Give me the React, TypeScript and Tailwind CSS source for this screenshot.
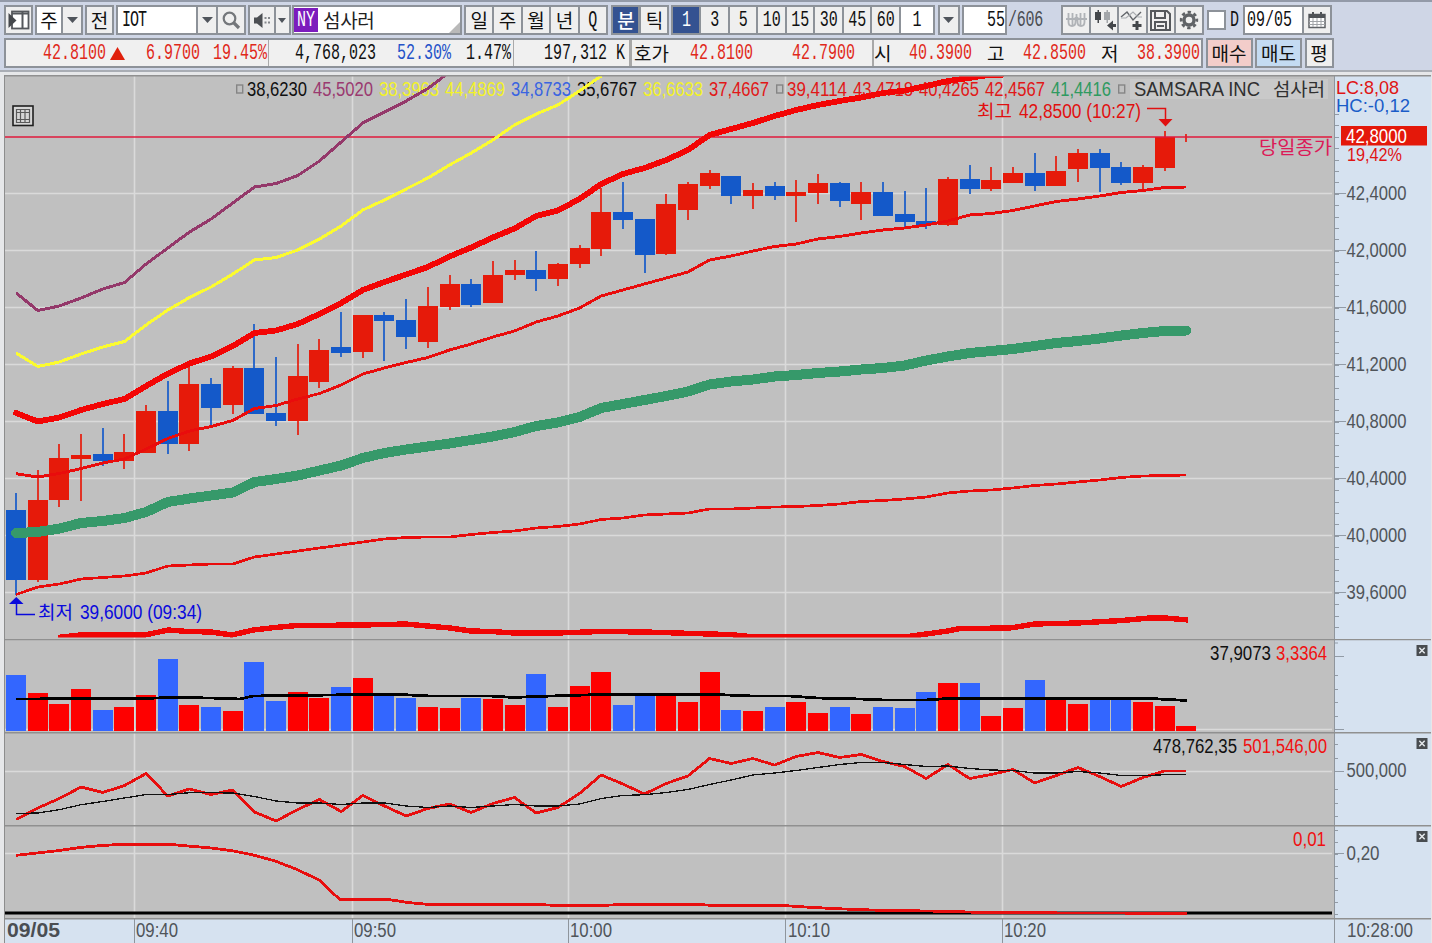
import React from "react";

const RED = "#e61a0a";
const BLUE = "#1459c9";
const X0 = 16.1;
const STEP = 21.67;
const cx = (i: number) => X0 + STEP * i;

type Candle = [0 | 1, number, number, number, number];

// [rising, bodyTop, bodyBottom, high, low]
const candles: Candle[] = [
  [0, 510, 580, 493, 595], [1, 499.5, 580, 469.5, 582], [1, 457.7, 500.3, 444, 506.7],
  [1, 454.5, 459, 433.5, 500.7], [0, 454, 460.5, 427.5, 466], [1, 451.5, 460.5, 433.5, 469],
  [1, 411, 452.7, 405, 452.7], [0, 411, 443.5, 381, 454], [1, 384, 443.5, 366, 451],
  [0, 384, 407.7, 377.7, 425], [1, 367.7, 404.7, 365.7, 414], [0, 367.7, 413.7, 324, 413.7],
  [0, 412.5, 421, 357, 425.7], [1, 375.5, 421, 343.5, 435], [1, 349.7, 382, 339, 388],
  [0, 346.5, 352.5, 312, 356.7], [1, 315, 352, 315, 358], [0, 315, 320.7, 312, 361],
  [0, 319.7, 337.3, 298.5, 349], [1, 306, 341.7, 286.7, 347.7], [1, 283.5, 307, 274.7, 310],
  [0, 283.5, 304.5, 279, 307], [1, 274.7, 303, 261, 303], [1, 270, 274.5, 259.5, 280],
  [0, 270, 278.7, 250.5, 290.7], [1, 264, 278.7, 262.5, 286], [1, 247.5, 263.7, 244.5, 268],
  [1, 211.7, 248.7, 188, 256], [0, 211.7, 220.3, 181.7, 229], [0, 219.3, 254.7, 219.3, 273],
  [1, 204, 253.5, 193.5, 254.7], [1, 184.3, 210, 181.7, 220], [1, 172.7, 185.7, 169.5, 188.7],
  [0, 175.5, 196.3, 175.5, 204], [1, 190.3, 196.3, 183, 208.5], [0, 186, 196.3, 181.7, 199.5],
  [1, 191.7, 196.3, 180, 221.7], [1, 182.7, 193.3, 174, 203.7], [0, 182.7, 200.7, 181.5, 207],
  [1, 191.7, 203.7, 181.5, 220.3], [0, 191.7, 216, 181.5, 216], [0, 214.3, 221.7, 190.5, 228],
  [0, 220.5, 225.3, 187.5, 229], [1, 178.5, 225, 177, 226.3], [0, 178.5, 189, 165, 193.5],
  [1, 180, 189, 166.5, 190.5], [1, 172.5, 182.7, 166.5, 182.7], [0, 172.5, 186, 152.7, 190.5],
  [1, 171, 186, 156, 186], [1, 153, 169.3, 148.7, 181.5], [0, 153, 167.7, 148.5, 191.7],
  [0, 166.5, 182.7, 162, 184.5], [1, 166.5, 182.7, 165, 189], [1, 137, 167.7, 130.5, 170.7],
  [1, 137, 137, 133.5, 142.3],
];

const volumeTops = [
  675, 693, 703.5, 688.5, 709.5, 706.5, 694.5, 658.5, 705, 706.5, 711, 661.5, 700.5, 691.5, 697.5,
  687, 678, 695.5, 698, 706.5, 708, 697.5, 699, 705, 673.5, 706.5, 685.5, 672, 705, 696, 696, 702,
  672, 709.5, 711, 706.5, 702, 712.5, 706.5, 714, 706.5, 708, 691.5, 682.5, 682.5, 715.5, 708,
  679.5, 699.5, 703.5, 699.5, 700, 702, 705.5, 726,
];

const series = (ys: number[]) => ys.map((y, i) => `${cx(i).toFixed(1)},${y}`).join(" ");

const purple =
  series([293, 310.5, 306, 298, 289, 282.5, 264, 248, 232, 219, 203, 187, 183.5, 175.5, 161, 142, 123, 112, 101, 88.5]) +
  " 443,77 450,72";
const yellow = series([
  353, 366.5, 362, 354, 347, 341.5, 325, 310, 297.5, 287, 274, 260, 257.5, 250, 239, 226, 210, 200, 189,
  178, 165, 153, 140, 125, 114, 105, 91, 76,
]);
const upperBand =
  series([
    413, 421.5, 417.5, 410, 404, 399, 386, 373.7, 363.5, 356.5, 346, 333, 330.5, 324, 314, 303, 290, 282,
    274.5, 267, 256.5, 247.5, 237.5, 228.5, 216, 210.5, 199, 184, 174, 168, 160, 150, 135, 129, 123, 116,
    110, 105, 101, 97.5, 93, 90.5, 86, 81, 78,
  ]) + " 985,75.5 1002,75";
const midBand = series([
  473.7, 477, 473.5, 468.5, 463, 459, 449, 438.5, 431, 426.5, 420.5, 408.5, 405.5, 399, 393.5, 385, 374,
  368, 362.5, 357.5, 350, 344, 337, 331, 322, 316, 308, 296, 290, 284, 278, 272, 260, 256, 251, 246.5,
  244, 239, 236.5, 233, 230, 228, 225, 221, 215, 213.5, 210.5, 206, 201.5, 199, 196, 192.5, 190.5, 187.5, 187,
]);
const green = series([
  533, 532, 528.5, 523, 521, 518, 512, 502, 498.5, 495.5, 492.5, 482, 479, 475.5, 470.5, 465.5, 458, 453,
  449.5, 446.5, 443.5, 440, 436.5, 432, 426, 422.5, 417, 408, 404, 400, 396, 391.5, 384.5, 381.5, 379.5,
  376.5, 375, 373, 371.5, 369.5, 368, 365.5, 360.5, 356.5, 353, 351, 349, 346, 343, 341, 338.5, 335.5,
  333, 331, 330.5,
]);
const lowBand = series([
  594.5, 587, 584, 579, 577.5, 576, 573, 566, 565, 564, 564, 557, 554, 551, 548, 545, 542, 539, 537.5,
  537, 537, 534.5, 532.5, 531, 528, 526.5, 524, 519.5, 518, 515, 514, 513, 509, 509, 508, 507, 506.5,
  505.5, 504, 501.5, 500.5, 499, 497, 493, 491, 490, 488, 485.5, 484, 482, 480, 477.5, 476, 475.5, 475,
]);
const floorBand =
  "58,637.5 80,635 145,635 168,630 188,631.5 211,632 232,635 253,630 275,627.5 297,625.5 363,625 406,624 427,626 450,628 471,631 492,631.5 514,633 557,633 601,631.5 645,632 709,634 730,634.5 755,637 905,637 926,634 948,631 960,628.5 1010,628 1035,624 1078,623 1122,620.5 1150,618 1165,618 1188,620";
const volumeAvg =
  "16,699 145,698.5 168,697.5 211,698 240,699 253,696 297,695.5 363,694.5 400,694.5 430,696 490,696 514,697.5 535,696.5 601,694.5 715,694.5 752,696 790,696 817,698 860,699 884,700 926,700 948,698.5 1150,698.5 1187,700.5";
const amount = series([
  819.5, 808, 798.5, 787, 792.5, 785.5, 773.5, 796, 789, 794.5, 790, 812, 821, 809.5, 799.5, 811.5, 795.5,
  806, 816, 808.5, 804, 812.5, 803.5, 797.5, 813, 807.5, 793.5, 775, 784, 794, 783.5, 776, 758.5, 763.5,
  758.5, 765, 756.5, 752.5, 757.5, 754.5, 761.5, 766.5, 778.5, 764.5, 778.5, 774.5, 769.5, 783, 775.5,
  767.5, 776.5, 786.5, 777.5, 771, 771,
]);
const amountAvg = series([
  813.5, 813, 809.7, 804.7, 801.5, 798, 794.5, 794.5, 792.7, 792.7, 793, 796.5, 801, 803, 803, 804.5, 803,
  803, 806, 807.5, 806, 807.5, 806, 804.5, 806, 806, 804, 798.5, 795.5, 794.7, 792.5, 789.5, 784.5, 780,
  775, 773, 770.5, 767.5, 764.5, 762.5, 762.5, 764.5, 766.5, 766, 768.5, 770, 770.5, 773, 773, 771.5, 773,
  775.5, 775.7, 774.7, 774.7,
]);
const slope =
  "16,855.3 37,853 58,850.7 80,847.5 102,845.5 124,844.2 168,844.2 188,846 211,848 232,850.7 253,855 275,861 297,869.5 319,880 340,899.7 390,899.7 406,902.3 427,904.3 535,904.3 557,905.5 601,905.5 622,904.5 700,904.5 715,905.7 786,905.7 805,907 836,908.7 880,910.3 945,911.3 990,912.7 1187,913.3";

const gridX = [134, 352, 568, 785, 1002];
const gridY = [193.5, 250.5, 307.5, 364.5, 421.5, 478.5, 535.5, 592.5];
const priceLabels = ["42,4000", "42,0000", "41,6000", "41,2000", "40,8000", "40,4000", "40,0000", "39,6000"];

function Label(p: { x: number; y: number; w: number; fill: string; children: string; size?: number; bold?: boolean; kr?: boolean }) {
  return (
    <text
      x={p.x}
      y={p.y}
      textLength={p.w}
      lengthAdjust="spacingAndGlyphs"
      fill={p.fill}
      fontSize={p.size ?? 20}
      fontWeight={p.bold ? 700 : 400}
      fontFamily={p.kr ? "'Noto Sans CJK KR', sans-serif" : "'Liberation Sans', sans-serif"}
    >
      {p.children}
    </text>
  );
}

function VerticalGrid({ y1, y2 }: { y1: number; y2: number }) {
  return (
    <g stroke="#dadada" strokeWidth={1.6}>
      {gridX.map((x) => (
        <line key={x} x1={x + 0.5} x2={x + 0.5} y1={y1} y2={y2} />
      ))}
    </g>
  );
}

function Ticks({ ys, w }: { ys: number[]; w: number }) {
  return (
    <g stroke="#929ba6" strokeWidth={1}>
      {ys.map((y) => (
        <line key={y} x1={1335} x2={1335 + w} y1={y} y2={y} />
      ))}
    </g>
  );
}

function CloseBox({ y }: { y: number }) {
  return (
    <g>
      <rect x={1416.5} y={y} width={11} height={11} fill="#484c50" />
      <path d={`M1419.3 ${y + 2.8}l5.4 5.4m0 -5.4l-5.4 5.4`} stroke="#e4e8ec" strokeWidth={1.5} />
    </g>
  );
}

function Panel(p: { top: number; height: number; plot: React.ReactNode; axis: React.ReactNode; className: string }) {
  return (
    <div className={`flex shrink-0 ${p.className}`}>
      <svg className="block shrink-0 bg-[#c0c0c0]" width={1329} height={p.height} viewBox={`5 ${p.top} 1329 ${p.height}`}>
        {p.plot}
      </svg>
      <svg className="block shrink-0 bg-[#d6e2f0]" width={97} height={p.height} viewBox={`1334 ${p.top} 97 ${p.height}`}>
        <line x1={1334.5} x2={1334.5} y1={p.top} y2={p.top + p.height} stroke="#8f959c" />
        {p.axis}
      </svg>
    </div>
  );
}

const header: [string, number, string][] = [
  ["38,6230", 247, "#101010"], ["45,5020", 313, "#9a3a70"], ["38,3963", 379, "#f2f22a"],
  ["44,4869", 445, "#f2f22a"], ["34,8733", 511, "#3a64e0"], ["35,6767", 577, "#101010"],
  ["36,6633", 643, "#f2f22a"], ["37,4667", 709, "#e01818"], ["39,4114", 787, "#e01818"],
  ["43,4718", 853, "#e01818"], ["40,4265", 919, "#e01818"], ["42,4567", 985, "#e01818"],
  ["41,4416", 1051, "#2f9a60"],
];

function MainPlot() {
  return (
    <>
      <defs>
        <clipPath id="price-area">
          <rect x={5} y={76.5} width={1328} height={561} />
        </clipPath>
      </defs>
      <g stroke="#dadada" strokeWidth={1.6}>
        {gridY.map((y) => (
          <line key={y} x1={5} x2={1332} y1={y} y2={y} />
        ))}
      </g>
      <VerticalGrid y1={76} y2={639} />
      <line x1={5} x2={1334} y1={75.8} y2={75.8} stroke="#909090" strokeWidth={1.6} />
      {header.map(([t, x, c]) => (
        <Label key={x} x={x} y={96} w={60} fill={c}>{t}</Label>
      ))}
      <g fill="none" stroke="#858585" strokeWidth={1.4}>
        <rect x={236.7} y={85} width={6} height={8} />
        <rect x={776.7} y={85} width={6} height={8} />
        <rect x={1118.7} y={85} width={6} height={8} />
      </g>
      <rect x={1130} y={79} width={198} height={20} fill="#c9c9c9" />
      <Label x={1134} y={96} w={126} fill="#303030" size={19.5}>SAMSARA INC</Label>
      <Label x={1273} y={95.5} w={52} fill="#303030" size={18} kr>섬사러</Label>

      <g shapeRendering="crispEdges">
        {candles.map(([up, t, b, h, l], i) => {
          const fill = up ? RED : BLUE;
          return (
            <g key={i} fill={fill}>
              <rect x={Math.round(cx(i)) - 0.6} y={h} width={2} height={l - h} opacity={0.85} />
              {b > t && <rect x={Math.round(cx(i)) - 9.6} y={t} width={19.3} height={b - t} />}
            </g>
          );
        })}
      </g>
      <line x1={5} x2={1332} y1={137} y2={137} stroke="#e01a3c" strokeWidth={1.6} />
      <g fill="none" strokeLinejoin="round" shapeRendering="crispEdges" clipPath="url(#price-area)">
        <polyline points={purple} stroke="#94386a" strokeWidth={3} />
        <polyline points={yellow} stroke="#fbfb30" strokeWidth={3} />
        <polyline points={green} stroke="#36996a" strokeWidth={10} strokeLinecap="round" />
        <polyline points={midBand} stroke="#e90c0c" strokeWidth={2.9} />
        <polyline points={lowBand} stroke="#e90c0c" strokeWidth={2.7} />
        <polyline points={upperBand} stroke="#f30505" strokeWidth={5.8} strokeLinecap="round" />
        <polyline points={floorBand} stroke="#f00606" strokeWidth={5.4} />
      </g>

      <Label x={977} y={117.5} w={35} fill="#e01010" size={18} kr>최고</Label>
      <Label x={1019} y={118} w={122} fill="#e01010">42,8500 (10:27)</Label>
      <path d="M1147 108.5h18.5v11" fill="none" stroke="#e01010" strokeWidth={1.5} />
      <path d="M1158.5 119h14l-7 7.5z" fill="#e01010" />
      <Label x={1259} y={154} w={73} fill="#dc1a58" size={18.5} kr>당일종가</Label>

      <path d="M35 614.5H16.5V603" fill="none" stroke="#0a0adc" strokeWidth={1.5} />
      <path d="M9 604h14.5l-7.2-7z" fill="#0a0adc" />
      <Label x={38} y={619} w={35} fill="#0a0adc" size={18} kr>최저</Label>
      <Label x={80} y={619} w={122} fill="#0a0adc">39,6000 (09:34)</Label>

      <rect x={13} y={106} width={20} height={19.5} fill="#d6d6d6" stroke="#202020" strokeWidth={1.6} />
      <path d="M16.5 109.5h13v13h-13zM16.5 112.5h13M16.5 119.5h13M20.5 109.5v13M25 109.5v13" fill="none" stroke="#5a5a5a" strokeWidth={1.2} />
    </>
  );
}

function MainAxis() {
  const minor: number[] = [];
  for (let y = 114; y < 637; y += 11.4) minor.push(Math.round(y) + 0.5);
  return (
    <>
      <line x1={1334} x2={1431} y1={75.8} y2={75.8} stroke="#909090" strokeWidth={1.6} />
      <Ticks ys={minor} w={4} />
      <Ticks ys={gridY} w={11} />
      <Label x={1336} y={94} w={63} fill="#e01414" size={18.5}>LC:8,08</Label>
      <Label x={1336} y={112} w={74} fill="#1a5cc8" size={18.5}>HC:-0,12</Label>
      <rect x={1341} y={126} width={86} height={19.5} fill="#e4180a" />
      <Label x={1346} y={142.5} w={61} fill="#ffffff">42,8000</Label>
      <Label x={1347} y={160.500} w={55} fill="#e01414" size={18.5}>19,42%</Label>
      {priceLabels.map((t, i) => (
        <Label key={t} x={1346.5} y={199.5 + 57 * i} w={60} fill="#50555a">{t}</Label>
      ))}
    </>
  );
}

function Caret() {
  return (
    <svg width="11" height="6" viewBox="0 0 11 6">
      <path d="M0 0h11L5.5 6z" fill="#50555c" />
    </svg>
  );
}

function Num({ children, className = "" }: { children: React.ReactNode; className?: string }) {
  return (
    <span className={`inline-block shrink-0 translate-y-[1.5px] whitespace-pre font-['Liberation_Mono',monospace] text-[15px] leading-5 scale-y-[1.42] ${className}`}>
      {children}
    </span>
  );
}

function Kr({ children, className = "" }: { children: React.ReactNode; className?: string }) {
  return <span className={`inline-block shrink-0 -translate-y-[1.5px] whitespace-nowrap text-[19px] ${className}`}>{children}</span>;
}

const box = "flex shrink-0 items-center justify-center border-2 border-[#8d9299] bg-[#efefef] h-[30px]";
const field = "flex shrink-0 items-center border-2 border-[#8d9299] bg-white h-[30px]";
const active = "flex shrink-0 items-center justify-center border-2 border-[#8d9299] bg-[#345291] text-white h-[30px]";

function TopRow() {
  return (
    <div className="flex h-[30px] w-full shrink-0 items-center pl-1">
      <div className={`${box} w-[29px]`}>
        <svg width="22" height="20" viewBox="0 0 22 20">
          <rect x="4" y="1.500" width="16.500" height="17" fill="#fff" stroke="#55585c" strokeWidth="1.800" />
          <path d="M4 3.500h16.500M14.500 2v17" stroke="#55585c" strokeWidth="2" />
          <path d="M0.500 3l8 7.500-8 7.500z" fill="#45484c" />
        </svg>
      </div>
      <div className={`${field} ml-[2px] w-[28px] justify-center`}><Kr>주</Kr></div>
      <div className={`${box} -ml-[2px] w-[22px]`}><Caret /></div>
      <div className={`${box} ml-[2px] w-[29px] bg-[#e4e4e4]`}><Kr>전</Kr></div>
      <div className={`${field} ml-[2px] w-[82px] pl-[4px]`}><Num className="tracking-[-1px]">IOT</Num></div>
      <div className={`${box} -ml-[2px] w-[22px]`}><Caret /></div>
      <div className={`${box} -ml-[2px] w-[30px]`}>
        <svg width="19" height="19" viewBox="0 0 19 19" fill="none" stroke="#74777b">
          <circle cx="7.5" cy="7.5" r="5.8" strokeWidth="2.200" />
          <path d="M11.5 11.5l5.500 5.500" strokeWidth="3.200" />
        </svg>
      </div>
      <div className={`${box} ml-[2px] w-[28px]`}>
        <svg width="19" height="17" viewBox="0 0 19 17" fill="#4c4f53">
          <path d="M1 5.5h3L9.5 1v15L4 11.500H1z" />
          <path d="M11.500 5h2v2h-2zM15 5h2v2h-2zM11.500 9.500h2v2h-2zM15 9.500h2v2h-2z" fill="#85888c" />
        </svg>
      </div>
      <div className={`${box} -ml-[2px] w-[16.500px]`}>
        <svg width="8" height="5" viewBox="0 0 8 5"><path d="M0 0h8L4 5z" fill="#50555c" /></svg>
      </div>
      <div className={`${field} ml-[1.500px] w-[170px]`}>
        <span className="flex h-6 w-6 items-center justify-center bg-[#7c1cbd] text-white"><Num className="-translate-y-px">NY</Num></span>
        <Kr className="ml-[5px] tracking-[-0.3px] text-[#222]">섬사러</Kr>
        <svg className="ml-auto mt-auto" width="11" height="11" viewBox="0 0 11 11"><path d="M11 0v11H0z" fill="#b9b9b9" /></svg>
      </div>
      <div className="ml-[2px] flex">
        {["일", "주", "월", "년", "Q"].map((t, i) => (
          <div key={t} className={`${box} w-[30.4px] ${i ? "-ml-[2px]" : ""}`}>{t === "Q" ? <Num>Q</Num> : <Kr>{t}</Kr>}</div>
        ))}
      </div>
      <div className="ml-[3.500px] flex">
        <div className={`${active} w-[29px]`}><Kr className="font-medium">분</Kr></div>
        <div className={`${box} -ml-px w-[30px]`}><Kr>틱</Kr></div>
      </div>
      <div className="ml-[2px] flex">
        <div className={`${active} w-[30px]`}><Num>1</Num></div>
        {["3", "5", "10", "15", "30", "45", "60"].map((t) => (
          <div key={t} className={`${box} -ml-[2px] w-[30.5px]`}><Num>{t}</Num></div>
        ))}
        <div className={`${field} -ml-[2px] w-[36px] justify-center`}><Num>1</Num></div>
      </div>
      <div className={`${box} ml-[3px] w-[22px]`}><Caret /></div>
      <div className={`${field} ml-[2px] w-[45px] justify-end`}><Num>55</Num></div>
      <Num className="ml-px w-[53px] tracking-[-0.2px] text-[#4a4d52]">/606</Num>
      <div className="flex">
        <div className={`${box} w-[30.2px]`}>
          <svg width="21" height="16" viewBox="0 0 21 16" fill="none" stroke="#b0b3b7" strokeWidth="1.8">
            <path d="M2.500 1v9q0 4 3.500 4t3.500-4V5M11.500 5v5q0 4 3.500 4t3.500-4V1M6.500 1v13M14.500 1v13M10.500 2v7M0 7h21" />
          </svg>
        </div>
        <div className={`${box} -ml-[2px] w-[30.2px]`}>
          <svg width="24" height="24" viewBox="0 0 24 24">
            <path d="M3 4h6v8H3zM5.500 2h1.500v13H5.500z" fill="#44474b" />
            <path d="M12 4h6v8h-6zM14.500 2H16v13h-1.500z" fill="#a3a6aa" />
            <path d="M15 17.500l6-5v3.500h3v3h-3v3.500z" fill="#44474b" />
          </svg>
        </div>
        <div className={`${box} -ml-[2px] w-[30.2px]`}>
          <svg width="24" height="24" viewBox="0 0 24 24" fill="none">
            <path d="M1 9l6-5 6 8 8-8" stroke="#62656a" strokeWidth="1.400" />
            <path d="M1 10l5 0 7-6 5 5 4 0" stroke="#aaadb1" strokeWidth="1.200" />
            <path d="M17 13v9M12.500 17.500h9" stroke="#44474b" strokeWidth="3" />
          </svg>
        </div>
        <div className={`${box} -ml-[2px] w-[30.2px]`}>
          <svg width="23" height="23" viewBox="0 0 23 23" fill="none" stroke="#55585c" strokeWidth="2">
            <path d="M2 2h16l3 3v16H2zM6 2v7h10V2M6 21v-8h11v8M8 17h7" />
          </svg>
        </div>
        <div className={`${box} -ml-[2px] w-[30.2px]`}>
          <svg width="20" height="20" viewBox="0 0 20 20" fill="none" stroke="#606367">
            <circle cx="10" cy="10" r="5" strokeWidth="3.400" />
            <circle cx="10" cy="10" r="7.800" strokeWidth="2.800" strokeDasharray="3.300 2.826" strokeDashoffset="1.600" />
          </svg>
        </div>
      </div>
      <div className="ml-[3px] h-[20px] w-[19px] shrink-0 border-2 border-[#8d9299] bg-white" />
      <Num className="ml-[4px] w-[13px]">D</Num>
      <div className={`${field} w-[61px] pl-[2px]`}><Num>09/05</Num></div>
      <div className={`${box} -ml-[2px] w-[30px]`}>
        <svg width="18" height="17" viewBox="0 0 18 17">
          <rect x="1" y="2.500" width="16" height="13" fill="#fff" stroke="#606367" strokeWidth="1.500" />
          <path d="M1 2h16v4H1zM4 0h2v3H4zM12 0h2v3h-2z" fill="#505357" />
          <path d="M1 9.500h16M1 12.500h16M5 6v9M9 6v9M13 6v9" stroke="#a0a3a7" />
        </svg>
      </div>
    </div>
  );
}

function QuoteRow() {
  const red = "text-[#e0281a]";
  return (
    <div className="mt-[3px] flex h-[30px] shrink-0 items-center pl-1">
      <div className="flex h-[30px] w-[1199px] shrink-0 items-center border-2 border-[#8d9299] bg-[#f0f0f0]">
        <Num className={`w-[100px] text-right ${red}`}>42.8100</Num>
        <svg className="ml-1 shrink-0" width="15" height="13" viewBox="0 0 15 13"><path d="M7.500 0L15 13H0z" fill="#e0200c" /></svg>
        <Num className={`w-[75px] text-right ${red}`}>6.9700</Num>
        <Num className={`w-[67px] text-right ${red}`}>19.45%</Num>
        <span className="ml-[1px] h-[26px] w-px shrink-0 bg-[#aaa]" />
        <Num className="w-[107px] text-right">4,768,023</Num>
        <Num className="w-[75px] text-right text-[#2452c8]">52.30%</Num>
        <Num className="w-[60px] text-right">1.47%</Num>
        <span className="ml-[2px] h-[26px] w-px shrink-0 bg-[#aaa]" />
        <Num className="w-[111px] text-right">197,312 K</Num>
        <span className="ml-[4px] h-[26px] w-[3px] shrink-0 bg-[#a8a8a8]" />
        <Kr className="ml-[2px] w-[38px]">호가</Kr>
        <Num className={`w-[81px] text-right ${red}`}>42.8100</Num>
        <Num className={`w-[102px] text-right ${red}`}>42.7900</Num>
        <span className="ml-[17px] h-[26px] w-[2px] shrink-0 bg-[#a8a8a8]" />
        <Kr className="w-[17px]">시</Kr>
        <Num className={`w-[81px] text-right ${red}`}>40.3900</Num>
        <Kr className="ml-[15px] w-[17px]">고</Kr>
        <Num className={`w-[82px] text-right ${red}`}>42.8500</Num>
        <Kr className="ml-[15px] w-[17px]">저</Kr>
        <Num className={`w-[82px] text-right ${red}`}>38.3900</Num>
      </div>
      <div className="ml-[2.500px] flex h-[30px] w-[47px] shrink-0 items-center justify-center border-2 border-[#8d9299] bg-[#f3cdca]"><Kr>매수</Kr></div>
      <div className="ml-[2.500px] flex h-[30px] w-[47px] shrink-0 items-center justify-center border-2 border-[#8d9299] bg-[#c4dbf2]"><Kr>매도</Kr></div>
      <div className={`${box} ml-[2.500px] w-[29px]`}><Kr>평</Kr></div>
    </div>
  );
}

const range = (a: number, b: number, s: number) => {
  const out: number[] = [];
  for (let y = a; y <= b; y += s) out.push(Math.round(y) + 0.5);
  return out;
};

export default function App() {
  return (
    <div className="flex h-[943px] w-[1432px] flex-col overflow-hidden bg-[#e6e7e9] font-['Noto_Sans_CJK_KR',sans-serif] leading-none text-[#111]">
      <div className="flex h-[72px] w-full shrink-0 flex-col border-b-2 border-t-2 border-b-[#a9adb4] border-t-[#939aa8] bg-[#cfd6e6] pt-[3px]">
        <TopRow />
        <QuoteRow />
      </div>
      <div className="ml-1 mt-[3px] flex w-[1428px] flex-col border-l border-[#8d8d8d]">
        <Panel top={75} height={564} className="h-[564px]" plot={<MainPlot />} axis={<MainAxis />} />
        <Panel
          top={639}
          height={93}
          className="h-[93px]"
          plot={
            <>
              <VerticalGrid y1={639} y2={732} />
              <line x1={5} x2={1332} y1={729.5} y2={729.5} stroke="#dadada" strokeWidth={1.6} />
              <g shapeRendering="crispEdges">
                {volumeTops.map((t, i) => (
                  <rect key={i} x={Math.round(cx(i)) - 9.6} y={t} width={19.4} height={730.5 - t} fill={candles[i][0] ? "#fe0000" : "#3366ff"} />
                ))}
                <polyline points={volumeAvg} fill="none" stroke="#000" strokeWidth={2.8} />
              </g>
              <line x1={5} x2={1334} y1={639.5} y2={639.5} stroke="#909090" strokeWidth={1.5} />
              <Label x={1210} y={660} w={61} fill="#101010">37,9073</Label>
              <Label x={1276} y={660} w={51} fill="#f01010">3,3364</Label>
            </>
          }
          axis={
            <>
              <Ticks ys={[643, 675.5, 689.5, 702.5, 716.5]} w={3} />
              <Ticks ys={[656.5, 729.5]} w={9} />
              <line x1={1334} x2={1431} y1={639.5} y2={639.5} stroke="#909090" strokeWidth={1.5} />
              <CloseBox y={645} />
            </>
          }
        />
        <Panel
          top={732}
          height={93}
          className="h-[93px]"
          plot={
            <>
              <VerticalGrid y1={732} y2={825} />
              <line x1={5} x2={1332} y1={771.5} y2={771.5} stroke="#dadada" strokeWidth={1.6} />
              <g fill="none" shapeRendering="crispEdges">
                <polyline points={amount} stroke="#e80e0e" strokeWidth={2.8} strokeLinejoin="round" />
                <polyline points={amountAvg} stroke="#111" strokeWidth={1.3} />
              </g>
              <line x1={5} x2={1334} y1={732.7} y2={732.7} stroke="#909090" strokeWidth={1.5} />
              <Label x={1153} y={753} w={84} fill="#101010">478,762,35</Label>
              <Label x={1243} y={753} w={84} fill="#f01010">501,546,00</Label>
            </>
          }
          axis={
            <>
              <Ticks ys={[744.5, 758.5, 789.5, 803.5, 816.5]} w={3} />
              <Ticks ys={[771.5]} w={9} />
              <line x1={1334} x2={1431} y1={732.7} y2={732.7} stroke="#909090" strokeWidth={1.5} />
              <Label x={1346.5} y={777} w={60} fill="#50555a">500,000</Label>
              <CloseBox y={738} />
            </>
          }
        />
        <Panel
          top={825}
          height={93}
          className="h-[93px]"
          plot={
            <>
              <VerticalGrid y1={825} y2={918} />
              <line x1={5} x2={1332} y1={853.5} y2={853.5} stroke="#dadada" strokeWidth={1.6} />
              <line x1={5} x2={1332} y1={913} y2={913} stroke="#000" strokeWidth={3} />
              <polyline points={slope} fill="none" stroke="#e80e0e" strokeWidth={2.8} shapeRendering="crispEdges" />
              <line x1={5} x2={1334} y1={825.7} y2={825.7} stroke="#909090" strokeWidth={1.5} />
              <Label x={1293} y={846} w={33} fill="#f01010">0,01</Label>
            </>
          }
          axis={
            <>
              <Ticks ys={range(830, 916, 12)} w={3} />
              <Ticks ys={[853.5]} w={9} />
              <line x1={1334} x2={1431} y1={825.7} y2={825.7} stroke="#909090" strokeWidth={1.5} />
              <Label x={1346.5} y={859.5} w={33} fill="#50555a">0,20</Label>
              <CloseBox y={831} />
            </>
          }
        />
        <svg className="block shrink-0 bg-[#d6e2f0]" width={1426} height={25} viewBox="5 918 1426 25">
          <line x1={5} x2={1431} y1={918.7} y2={918.7} stroke="#909090" strokeWidth={1.5} />
          <g stroke="#8f959c">
            {[...gridX, 1334].map((x) => (
              <line key={x} x1={x + 0.5} x2={x + 0.5} y1={919} y2={943} />
            ))}
          </g>
          <Label x={7} y={937} w={53} fill="#4a4e53" size={20.5} bold>09/05</Label>
          <Label x={136} y={937} w={42} fill="#50555a">09:40</Label>
          <Label x={354} y={937} w={42} fill="#50555a">09:50</Label>
          <Label x={570} y={937} w={42} fill="#50555a">10:00</Label>
          <Label x={788} y={937} w={42} fill="#50555a">10:10</Label>
          <Label x={1004} y={937} w={42} fill="#50555a">10:20</Label>
          <Label x={1347} y={937} w={66} fill="#50555a">10:28:00</Label>
        </svg>
      </div>
    </div>
  );
}
